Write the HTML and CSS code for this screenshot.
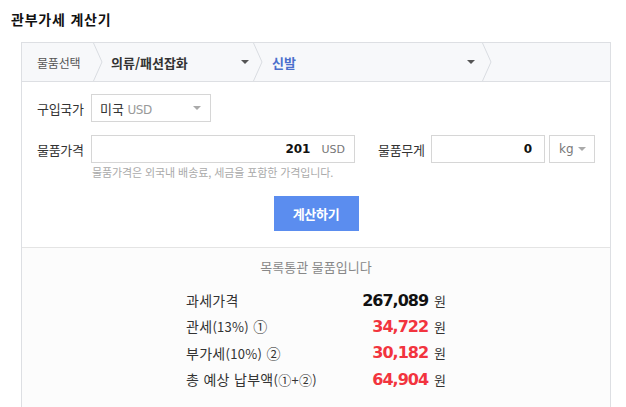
FILE: index.html
```html
<!DOCTYPE html>
<html lang="ko">
<head>
<meta charset="utf-8">
<title>관부가세 계산기</title>
<link rel="stylesheet" href="styles.css">
</head>
<body>
<h1 class="title">관부가세 계산기</h1>
<div class="calc">
  <div class="crumbs">
    <div class="crumb crumb-first">물품선택</div>
    <svg class="chev" width="10" height="38" viewBox="0 0 10 38"><path d="M0.5 0 L9 19 L0.5 38" fill="none" stroke="#d9dce1" stroke-width="1"/></svg>
    <div class="crumb crumb-cat"><span>의류/패션잡화</span><i class="caret"></i></div>
    <svg class="chev" width="10" height="38" viewBox="0 0 10 38"><path d="M0.5 0 L9 19 L0.5 38" fill="none" stroke="#d9dce1" stroke-width="1"/></svg>
    <div class="crumb crumb-sub"><span>신발</span><i class="caret"></i></div>
    <svg class="chev" width="10" height="38" viewBox="0 0 10 38"><path d="M0.5 0 L9 19 L0.5 38" fill="none" stroke="#d9dce1" stroke-width="1"/></svg>
    <div class="crumb-rest"></div>
  </div>
  <div class="form">
    <div class="row">
      <span class="label">구입국가</span>
      <div class="select country"><span class="val">미국 <span class="cur">USD</span></span><i class="caret light"></i></div>
    </div>
    <div class="row">
      <span class="label">물품가격</span>
      <div class="input price"><b class="num">201</b><span class="unit-txt">USD</span></div>
      <span class="label weight-label">물품무게</span>
      <div class="input weight"><b class="num">0</b></div>
      <div class="select unit"><span class="val kg">kg</span><i class="caret light"></i></div>
    </div>
    <p class="hint">물품가격은 외국내 배송료, 세금을 포함한 가격입니다.</p>
    <button class="btn">계산하기</button>
  </div>
  <div class="result">
    <p class="notice">목록통관 물품입니다</p>
    <div class="lines">
      <div class="line"><span class="ln-label">과세가격</span><span class="ln-val"><b class="amount">267,089</b><span class="won">원</span></span></div>
      <div class="line"><span class="ln-label">관세<small>(13%)</small> ①</span><span class="ln-val"><b class="amount red">34,722</b><span class="won">원</span></span></div>
      <div class="line"><span class="ln-label">부가세<small>(10%)</small> ②</span><span class="ln-val"><b class="amount red">30,182</b><span class="won">원</span></span></div>
      <div class="line"><span class="ln-label">총 예상 납부액<small>(①+②)</small></span><span class="ln-val"><b class="amount red">64,904</b><span class="won">원</span></span></div>
    </div>
  </div>
</div>
</body>
</html>
```
FILE: styles.css
```css
* { box-sizing: border-box; }
html, body { margin: 0; padding: 0; background: #fff; }
body {
  font-family: "Noto Sans CJK KR", "Noto Sans", sans-serif;
  color: #333;
}
.title {
  margin: 0;
  padding: 10px 0 0 11px;
  height: 42px;
  font-size: 14px;
  line-height: 18px;
  font-weight: bold;
  color: #111;
  letter-spacing: 0.8px;
}
.calc {
  margin-left: 21px;
  width: 590px;
  border: 1px solid #dddfe3;
  border-bottom: none;
  height: 365px;
}
.crumbs {
  display: flex;
  height: 39px;
  background: #f7f8fa;
  border-bottom: 1px solid #dddfe3;
}
.chev { flex: none; display: block; }
.crumb {
  display: flex;
  align-items: center;
  height: 38px;
  flex: none;
}
.crumb-first {
  width: 71px;
  padding-left: 15px;
  font-size: 12px;
  letter-spacing: -0.2px;
  color: #555;
}
.crumb-cat {
  width: 150px;
  padding-left: 8px;
  padding-right: 4px;
  justify-content: space-between;
  font-size: 13px;
  font-weight: bold;
  color: #333;
}
.crumb-sub {
  width: 219px;
  padding-left: 9px;
  padding-right: 7px;
  justify-content: space-between;
  font-size: 13px;
  font-weight: bold;
  color: #4a6fcc;
}
.crumb-rest { flex: 1; }
.caret {
  display: inline-block;
  width: 0;
  height: 0;
  border-left: 4px solid transparent;
  border-right: 4px solid transparent;
  border-top: 4px solid #555;
}
.caret.light { border-top-color: #aaa; }
.form {
  padding: 12px 0 16px 15px;
  border-bottom: 1px solid #e4e4e4;
  display: flex;
  flex-direction: column;
}
.row {
  display: flex;
  align-items: center;
  height: 28px;
  margin-bottom: 13px;
}
.row:nth-child(2) { margin-bottom: 1px; }
.label {
  width: 54px;
  flex: none;
  font-size: 13px;
  letter-spacing: -0.3px;
  color: #333;
}
.select, .input {
  height: 28px;
  border: 1px solid #d6d6d6;
  display: flex;
  align-items: center;
  background: #fff;
  flex: none;
}
.country {
  width: 120px;
  padding: 0 9px 0 8px;
  justify-content: space-between;
}
.val { font-size: 13px; color: #333; }
.cur { font-size: 12px; color: #999; font-family: "DejaVu Sans", sans-serif; letter-spacing: -0.5px; }
.price {
  width: 264px;
  justify-content: flex-end;
  padding-right: 9px;
}
.num {
  font-family: "DejaVu Sans", sans-serif;
  font-weight: bold;
  font-size: 12px;
  color: #111;
}
.unit-txt {
  margin-left: 11px;
  font-family: "DejaVu Sans", sans-serif;
  font-size: 11px;
  color: #777;
}
.weight-label {
  margin-left: 23px;
  width: 53px;
}
.weight {
  width: 114px;
  justify-content: flex-end;
  padding-right: 12px;
}
.unit {
  width: 46px;
  margin-left: 4px;
  padding: 0 8px 0 9px;
  justify-content: space-between;
}
.kg { font-family: "DejaVu Sans", sans-serif; font-size: 12px; color: #777; }
.hint {
  margin: 0 0 16px 55px;
  font-size: 11px;
  line-height: 16px;
  letter-spacing: -0.1px;
  color: #aaa;
}
.btn {
  align-self: center;
  margin-left: -15px;
  width: 85px;
  height: 35px;
  border: none;
  background: #5b8def;
  color: #fff;
  font-family: "Noto Sans CJK KR", sans-serif;
  font-size: 13px;
  font-weight: bold;
  letter-spacing: -0.3px;
  padding: 0;
}
.result {
  background: #fcfcfc;
  height: 160px;
  padding-top: 9px;
}
.notice {
  margin: 0;
  text-align: center;
  font-size: 13px;
  line-height: 20px;
  color: #888;
  letter-spacing: 0;
}
.lines {
  width: 260px;
  margin: 10px auto 0;
}
.line {
  display: flex;
  justify-content: space-between;
  align-items: center;
  height: 26.3px;
}
.ln-label {
  font-size: 14px;
  color: #333;
  letter-spacing: 0.3px;
}
.ln-label small { font-size: 13px; }
.ln-val { display: flex; align-items: center; }
.amount {
  font-family: "DejaVu Sans", sans-serif;
  font-weight: bold;
  font-size: 16px;
  letter-spacing: -1px;
  color: #111;
}
.amount.red { color: #f2343e; }
.won {
  margin-left: 6px;
  font-size: 13px;
  color: #333;
}
```
